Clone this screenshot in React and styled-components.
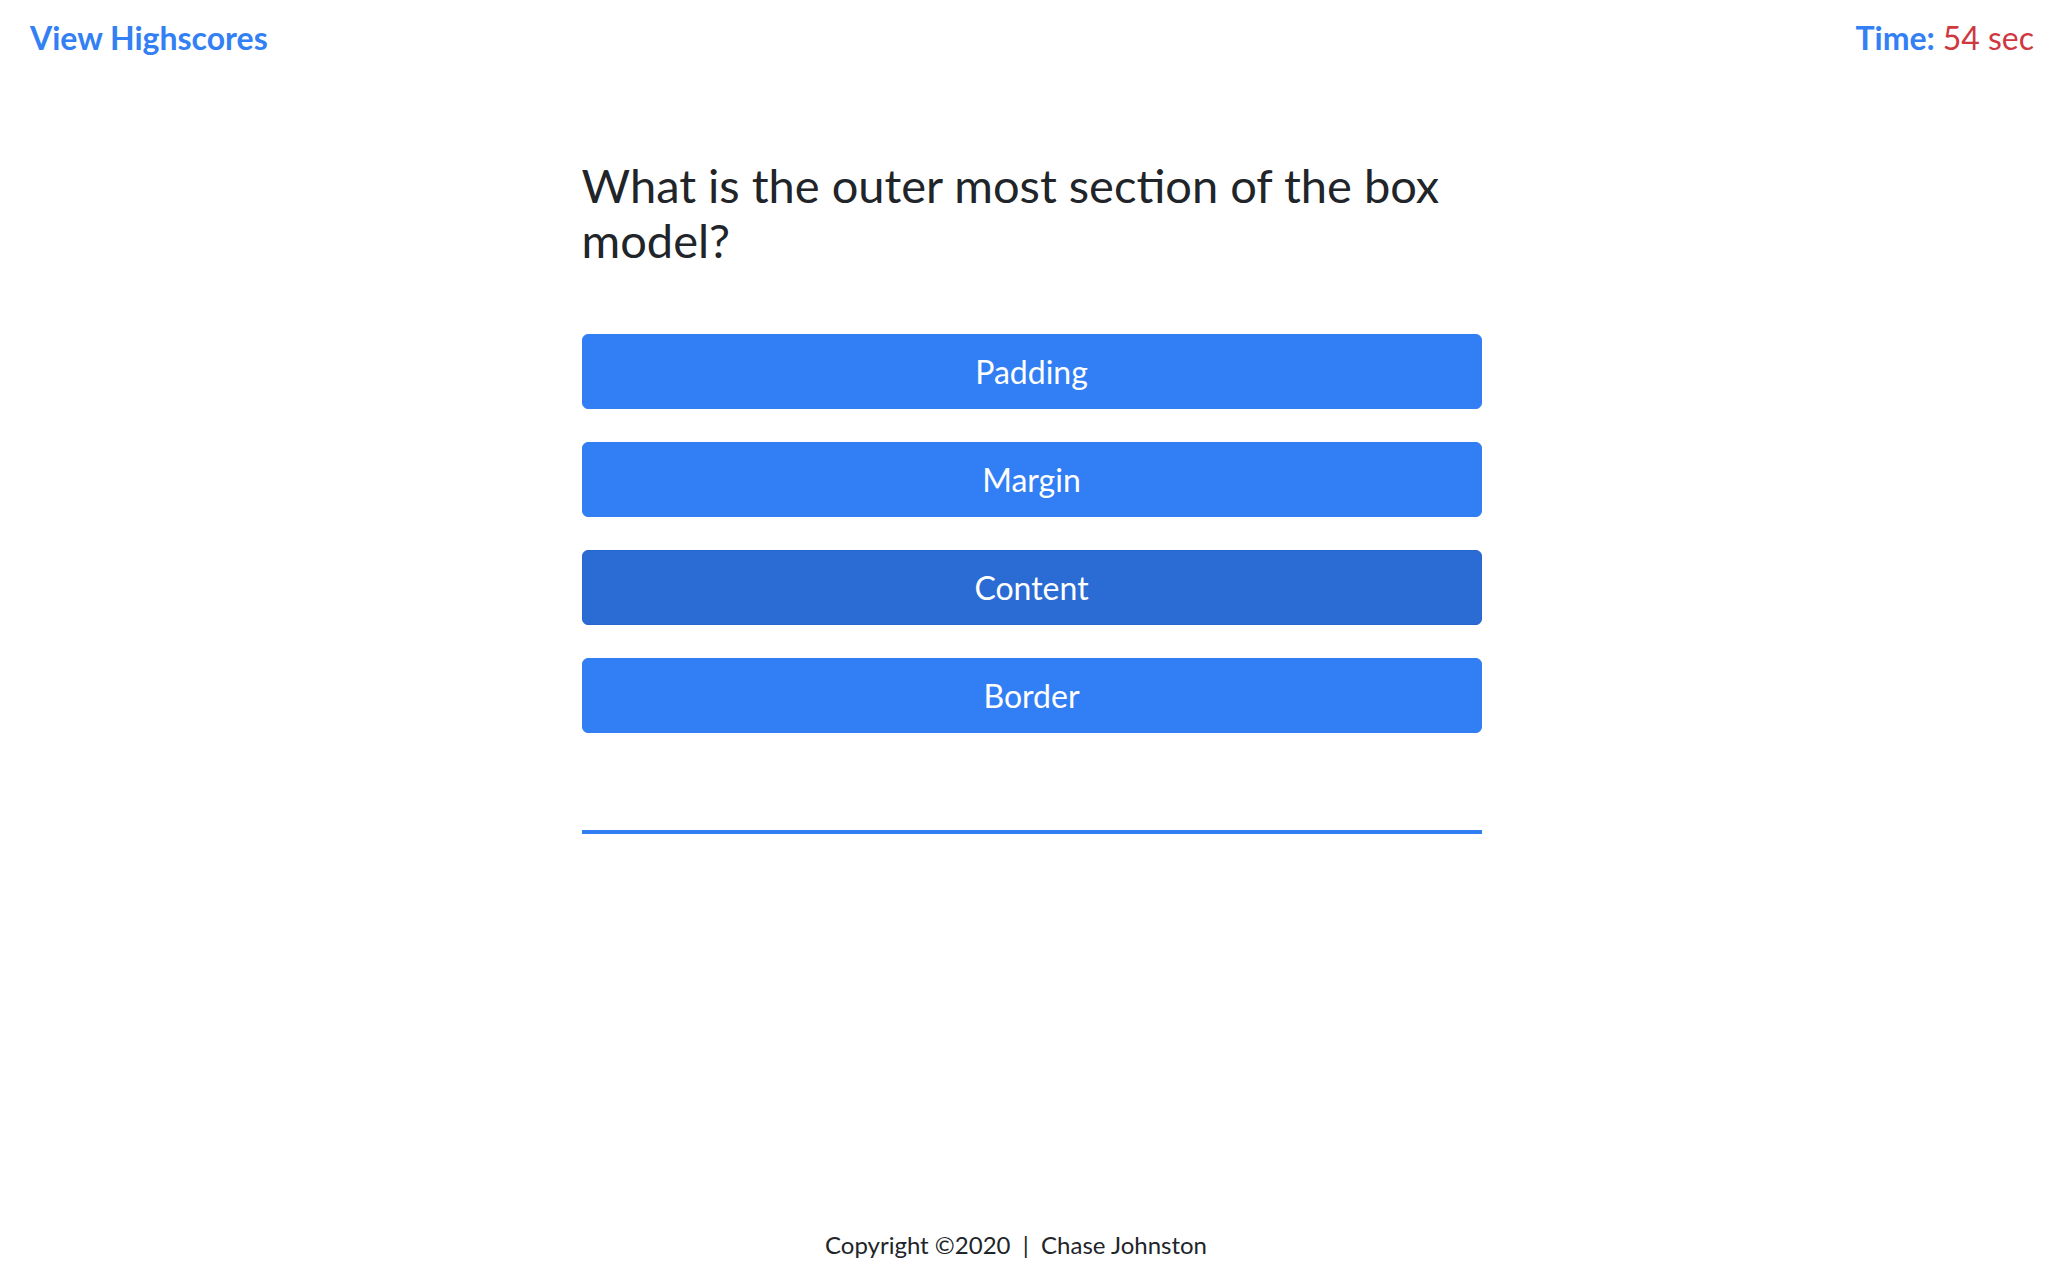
import React from 'react';
import styled, { createGlobalStyle } from 'styled-components';

const GlobalStyle = createGlobalStyle`
  html, body {
    margin: 0;
    padding: 0;
    background: #ffffff;
    font-family: Lato, "Open Sans", sans-serif;
    color: #212529;
  }
`;

const Page = styled.div`
  min-height: 100vh;
  display: flex;
  flex-direction: column;
  box-sizing: border-box;
`;

const TopBar = styled.header`
  display: flex;
  justify-content: space-between;
  align-items: center;
  padding: 18px 22px 0 30px;
  font-size: 32px;
  line-height: 40px;
`;

const HighscoreLink = styled.a`
  color: #3380f5;
  font-weight: 700;
  text-decoration: none;
  cursor: pointer;
`;

const Timer = styled.div`
  color: #3380f5;
  font-weight: 700;
  span {
    color: #d0383f;
    font-weight: 400;
  }
`;

const Quiz = styled.main`
  width: 900px;
  margin: 100px auto 0;
  padding-left: 7px;
  display: flex;
  flex-direction: column;
`;

const Question = styled.h1`
  margin: 0 0 66px;
  font-size: 47px;
  font-weight: 400;
  line-height: 55px;
  color: #212529;
`;

const Choices = styled.div`
  display: flex;
  flex-direction: column;
  gap: 33px;
`;

const Choice = styled.button`
  height: 75px;
  border: 1px solid ${(p) => (p.$active ? '#2766cc' : '#327ff5')};
  border-radius: 6px;
  background: ${(p) => (p.$active ? '#2a6bd4' : '#327ff5')};
  color: #ffffff;
  font-family: Lato, "Open Sans", sans-serif;
  font-size: 32px;
  cursor: pointer;
`;

const Divider = styled.hr`
  margin: 97px 0 0;
  border: 0;
  height: 4px;
  background: #327ff5;
`;

const Footer = styled.footer`
  margin-top: auto;
  padding: 0 24px 24px 0;
  text-align: center;
  font-size: 24px;
  line-height: 30px;
  color: #212529;
  white-space: pre;
`;

const answers = ['Padding', 'Margin', 'Content', 'Border'];

export default function App() {
  return (
    <>
      <GlobalStyle />
      <Page>
        <TopBar>
          <HighscoreLink>View Highscores</HighscoreLink>
          <Timer>
            Time: <span>54 sec</span>
          </Timer>
        </TopBar>
        <Quiz>
          <Question>What is the outer most section of the box model?</Question>
          <Choices>
            {answers.map((a) => (
              <Choice key={a} $active={a === 'Content'}>
                {a}
              </Choice>
            ))}
          </Choices>
          <Divider />
        </Quiz>
        <Footer>{'Copyright ©2020  |  Chase Johnston'}</Footer>
      </Page>
    </>
  );
}
